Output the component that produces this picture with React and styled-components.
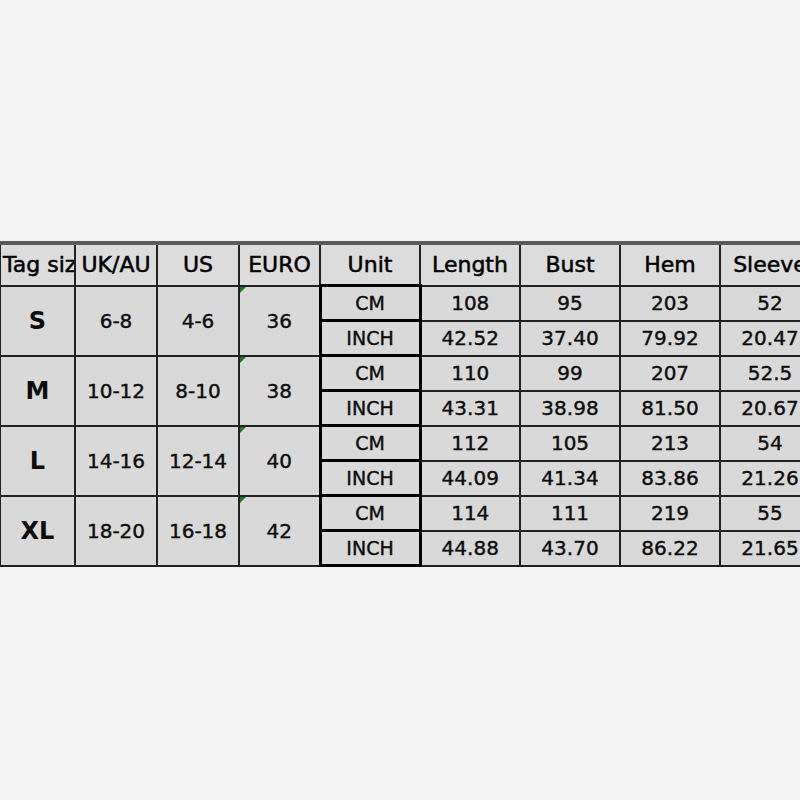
import React from "react";
import styled, { createGlobalStyle } from "styled-components";

const Global = createGlobalStyle`
  html, body { margin: 0; padding: 0; background: #f3f3f3; overflow: hidden; }
  body { width: 800px; height: 800px; }
`;

const Page = styled.div`
  padding-top: 241px;
  width: 800px;
  height: 800px;
  box-sizing: border-box;
  overflow: hidden;
`;

const Table = styled.table`
  border-collapse: collapse;
  table-layout: fixed;
  width: 820px;
  margin-left: -1px;
  border-top: 4px solid #5b5b5b;
  background: #d9d9d9;
`;

const HeadCell = styled.th`
  height: 39px;
  padding: 0;
  border: 2px solid #222;
  border-top: none;
  font-family: "DejaVu Sans", Verdana, sans-serif;
  font-weight: normal;
  font-size: 22px;
  color: #000;
  -webkit-text-stroke: 0.5px #000;
  text-align: ${(p) => (p.$left ? "left" : "center")};
  padding-left: ${(p) => (p.$left ? "2px" : "0")};
  white-space: nowrap;
  overflow: hidden;
  background: #dcdcdc;
`;

const Cell = styled.td`
  position: relative;
  height: 32px;
  padding: 0;
  border: ${(p) => (p.$unit ? "3px solid #000" : "2px solid #222")};
  font-family: "DejaVu Sans", Verdana, sans-serif;
  font-size: ${(p) => (p.$size ? "24px" : p.$unit ? "19px" : "20px")};
  font-weight: ${(p) => (p.$size ? "bold" : "normal")};
  color: #0c0c0c;
  -webkit-text-stroke: ${(p) => (p.$size ? "0" : "0.4px #0c0c0c")};
  text-align: center;
  vertical-align: middle;
  white-space: nowrap;
  overflow: hidden;
  background: #d9d9d9;
`;

const Marker = styled.span`
  position: absolute;
  left: 0;
  top: 0;
  width: 0;
  height: 0;
  border-top: 6px solid #1f7a1f;
  border-right: 6px solid transparent;
`;

const headers = ["Tag size", "UK/AU", "US", "EURO", "Unit", "Length", "Bust", "Hem", "Sleeve"];
const widths = [75, 82, 82, 81, 100, 100, 100, 100, 100];

const data = [
  { size: "S", uk: "6-8", us: "4-6", euro: "36", cm: ["108", "95", "203", "52"], inch: ["42.52", "37.40", "79.92", "20.47"] },
  { size: "M", uk: "10-12", us: "8-10", euro: "38", cm: ["110", "99", "207", "52.5"], inch: ["43.31", "38.98", "81.50", "20.67"] },
  { size: "L", uk: "14-16", us: "12-14", euro: "40", cm: ["112", "105", "213", "54"], inch: ["44.09", "41.34", "83.86", "21.26"] },
  { size: "XL", uk: "18-20", us: "16-18", euro: "42", cm: ["114", "111", "219", "55"], inch: ["44.88", "43.70", "86.22", "21.65"] },
];

export default function App() {
  return (
    <Page>
      <Global />
      <Table>
        <colgroup>
          {widths.map((w, i) => (
            <col key={i} style={{ width: w }} />
          ))}
        </colgroup>
        <thead>
          <tr>
            {headers.map((h, i) => (
              <HeadCell key={h} $left={i === 0}>
                {h}
              </HeadCell>
            ))}
          </tr>
        </thead>
        <tbody>
          {data.map((r) => (
            <React.Fragment key={r.size}>
              <tr>
                <Cell rowSpan={2} $size>{r.size}</Cell>
                <Cell rowSpan={2}>{r.uk}</Cell>
                <Cell rowSpan={2}>{r.us}</Cell>
                <Cell rowSpan={2}>
                  <Marker />
                  {r.euro}
                </Cell>
                <Cell $unit>CM</Cell>
                {r.cm.map((v, i) => (
                  <Cell key={i}>{v}</Cell>
                ))}
              </tr>
              <tr>
                <Cell $unit>INCH</Cell>
                {r.inch.map((v, i) => (
                  <Cell key={i}>{v}</Cell>
                ))}
              </tr>
            </React.Fragment>
          ))}
        </tbody>
      </Table>
    </Page>
  );
}
